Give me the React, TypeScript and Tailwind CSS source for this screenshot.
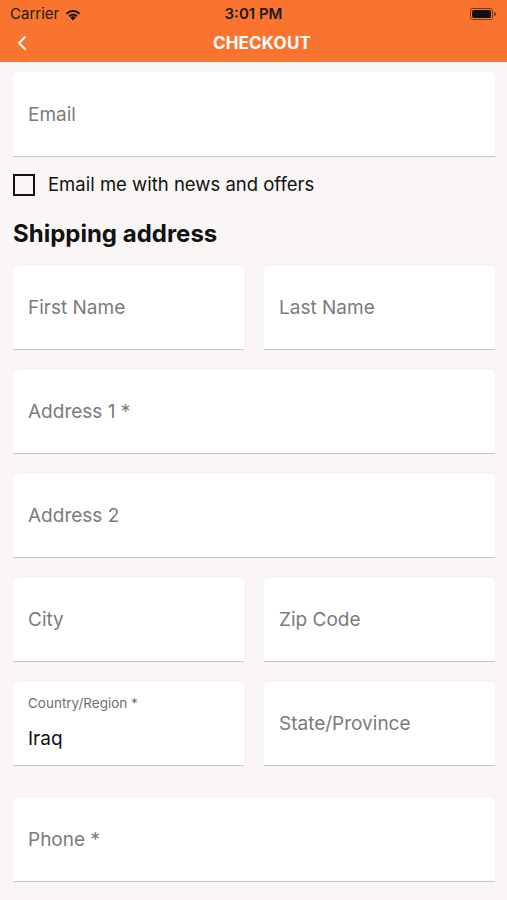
import React from "react";

function Field({ label, className = "" }: { label: string; className?: string }) {
  return (
    <div className={`h-[84px] bg-white rounded-t-[5px] border-b border-[#c4c4c4] flex items-center px-[15px] pt-[1px] ${className}`}>
      <span className="text-[19px] text-[#7b7b7b]">{label}</span>
    </div>
  );
}

function StatusBar() {
  return (
    <div className="h-[28px] flex items-center justify-between px-[10px] text-[#1a1a1a]">
      <div className="flex items-center gap-[5px] w-[120px]">
        <span className="text-[15px]">Carrier</span>
        <svg width="18" height="13" viewBox="0 0 18 13">
          <path d="M9 12.5 L6.3 9.6 A3.9 3.9 0 0 1 11.7 9.6 Z" fill="#111" />
          <path d="M4.4 7.6 A6.6 6.6 0 0 1 13.6 7.6 L12.3 9 A4.8 4.8 0 0 0 5.7 9 Z" fill="#111" />
          <path d="M1.9 5 A10.2 10.2 0 0 1 16.1 5 L14.8 6.4 A8.3 8.3 0 0 0 3.2 6.4 Z" fill="#111" />
        </svg>
      </div>
      <span className="text-[15px] font-semibold">3:01 PM</span>
      <div className="w-[120px] flex justify-end items-center pr-[1px]">
        <div className="w-[23px] h-[12px] rounded-[3px] border border-[#7a3a16] p-[1px] flex">
          <div className="flex-1 bg-[#111] rounded-[2px]" />
        </div>
        <div className="w-[2px] h-[4px] bg-[#7a3a16] rounded-r-sm ml-[1px]" />
      </div>
    </div>
  );
}

export default function App() {
  return (
    <div className="w-[507px] h-[900px] bg-[#f8f5f4] overflow-hidden" style={{ fontFamily: "Inter, 'Liberation Sans', sans-serif" }}>
      <div className="bg-[#f9742f]">
        <StatusBar />
        <div className="h-[34px] flex items-center relative">
          <svg className="absolute left-[16px] top-[7px]" width="12" height="16" viewBox="0 0 12 16">
            <path d="M9 2 L3 8 L9 14" stroke="#fff" strokeWidth="2" fill="none" strokeLinecap="round" strokeLinejoin="round" />
          </svg>
          <span className="mx-auto pl-[17px] text-white font-bold text-[17px] tracking-[0.2px] -mt-[2px]">CHECKOUT</span>
        </div>
      </div>

      <div className="px-[13px] pt-[10px] pr-[12px]">
        <div className="h-[85px] bg-white rounded-t-[5px] border-b border-[#c4c4c4] flex items-center px-[15px] pt-[3px]">
          <span className="text-[19px] text-[#7b7b7b]">Email</span>
        </div>

        <div className="flex items-center gap-[13px] mt-[14px]">
          <div className="w-[22px] h-[22px] border-2 border-[#111]" />
          <span className="text-[18.5px] text-[#111]">Email me with news and offers</span>
        </div>

        <h2 className="text-[24px] font-bold text-[#111] mt-[23px] leading-none">Shipping address</h2>

        <div className="grid grid-cols-2 gap-x-[20px] mt-[20px]">
          <Field label="First Name" />
          <Field label="Last Name" />
        </div>

        <Field label="Address 1 *" className="mt-[20px]" />
        <Field label="Address 2" className="mt-[20px]" />

        <div className="grid grid-cols-2 gap-x-[20px] mt-[20px]">
          <Field label="City" />
          <Field label="Zip Code" />
        </div>

        <div className="grid grid-cols-2 gap-x-[20px] mt-[20px]">
          <div className="h-[84px] bg-white rounded-t-[5px] border-b border-[#c4c4c4] flex flex-col px-[15px] pt-[15px]">
            <span className="text-[13.5px] text-[#6f6f6f] leading-none">Country/Region *</span>
            <span className="text-[19px] text-[#111] mt-[19px] leading-none">Iraq</span>
          </div>
          <Field label="State/Province" />
        </div>

        <Field label="Phone *" className="mt-[32px]" />
      </div>
    </div>
  );
}
